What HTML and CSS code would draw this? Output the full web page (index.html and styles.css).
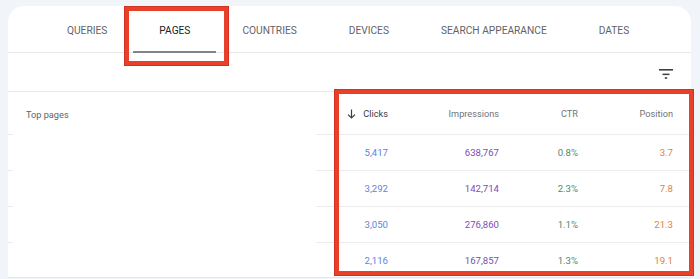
FILE: index.html
```html
<!DOCTYPE html>
<html lang="en">
<head>
    <meta charset="UTF-8">
    <title>Performance - Pages</title>
    <link rel="stylesheet" href="styles.css">
</head>
<body>
<div class="card">
    <div class="tabs">
        <div class="tab">Queries</div>
        <div class="tab active">Pages<span class="mark mark-tab"></span></div>
        <div class="tab">Countries</div>
        <div class="tab">Devices</div>
        <div class="tab">Search appearance</div>
        <div class="tab">Dates</div>
    </div>
    <div class="toolbar">
        <svg class="filter-icon" width="16" height="12" viewBox="0 0 16 12">
            <rect x="1" y="1" width="14" height="1.6" fill="#3c4043"/>
            <rect x="4.5" y="5.6" width="7" height="1.5" fill="#3c4043"/>
            <rect x="6.8" y="9.2" width="2.4" height="1.6" fill="#3c4043"/>
        </svg>
    </div>
    <div class="table">
        <div class="row head">
            <div class="stub"></div>
            <div class="page">Top pages</div>
            <div class="cell clicks-head">
                <svg width="9" height="10" viewBox="0 0 9 10">
                    <path d="M4.5 0.5 V9 M1 5.6 L4.5 9 L8 5.6" fill="none" stroke="#3c4043" stroke-width="1.2"/>
                </svg>
                Clicks
            </div>
            <div class="cell">Impressions</div>
            <div class="cell">CTR</div>
            <div class="cell">Position</div>
        </div>
        <div class="row">
            <div class="stub"></div>
            <div class="page"></div>
            <div class="cell clicks">5,417</div>
            <div class="cell impressions">638,767</div>
            <div class="cell ctr">0.8%</div>
            <div class="cell position">3.7</div>
        </div>
        <div class="row">
            <div class="stub"></div>
            <div class="page"></div>
            <div class="cell clicks">3,292</div>
            <div class="cell impressions">142,714</div>
            <div class="cell ctr">2.3%</div>
            <div class="cell position">7.8</div>
        </div>
        <div class="row">
            <div class="stub"></div>
            <div class="page"></div>
            <div class="cell clicks">3,050</div>
            <div class="cell impressions">276,860</div>
            <div class="cell ctr">1.1%</div>
            <div class="cell position">21.3</div>
        </div>
        <div class="row last">
            <div class="stub"></div>
            <div class="page"></div>
            <div class="cell clicks">2,116</div>
            <div class="cell impressions">167,857</div>
            <div class="cell ctr">1.3%</div>
            <div class="cell position">19.1</div>
        </div>
        <span class="mark mark-table"></span>
    </div>
</div>
</body>
</html>
```

FILE: styles.css
```css
* {
    box-sizing: border-box;
}
body {
    margin: 0;
    padding: 6px 9px 0 8px;
    background-color: #f1f4f9;
    font-family: Roboto, "Liberation Sans", Arial, sans-serif;
    color: #5f6368;
    height: 279px;
    overflow: hidden;
}
.card {
    background-color: #fff;
    border-radius: 16px 16px 0 0;
    border-bottom: 1px solid #e6e6e6;
    height: 272px;
}
.tabs {
    display: flex;
    padding-left: 33px;
    height: 47px;
    border-bottom: 1px solid #e8e8e8;
}
.tab {
    position: relative;
    padding: 19px 26px 0;
    font-size: 10.2px;
    text-transform: uppercase;
    color: #5f6368;
}
.tab.active {
    color: #202124;
}
.tab.active::after {
    content: "";
    position: absolute;
    left: 0;
    right: 0;
    bottom: -1px;
    height: 2px;
    background-color: #80868b;
}
.mark {
    position: absolute;
    border: 4px solid #e8402a;
    box-shadow: 0 0 0 1px #d2331f;
}
.mark-tab {
    left: -8px;
    right: -12px;
    top: 1px;
    bottom: -13px;
}
.toolbar {
    display: flex;
    justify-content: flex-end;
    align-items: center;
    height: 39px;
    padding: 4px 17px 0 0;
    border-bottom: 1px solid #e8e8e8;
}
.table {
    position: relative;
}
.mark-table {
    left: 327px;
    top: -2px;
    width: 358px;
    height: 185px;
}
.row {
    display: flex;
    height: 36px;
    font-size: 9.6px;
}
.row.head {
    height: 43px;
}
.row.last {
    height: 34px;
}
.stub {
    width: 5px;
    border-bottom: 1px solid #ececec;
}
.row.last .stub,
.row.last .cell {
    border-bottom: none;
}
.page {
    width: 303px;
    padding: 17px 0 0 13px;
    font-size: 9.2px;
    color: #5f6368;
}
.cell {
    display: flex;
    align-items: center;
    justify-content: flex-end;
    border-bottom: 1px solid #ececec;
    padding-bottom: 1px;
}
.row.last .cell {
    padding-bottom: 0;
}
.cell:nth-child(3) {
    width: 72px;
}
.cell:nth-child(4) {
    width: 111px;
}
.cell:nth-child(5) {
    width: 79px;
}
.cell:nth-child(6) {
    width: 113px;
    padding-right: 18px;
}
.head .cell {
    font-size: 9.2px;
    color: #70757a;
    padding: 1px 0 0;
}
.head .cell:nth-child(6) {
    padding-right: 18px;
}
.head .clicks-head {
    color: #3c4043;
    gap: 7px;
}
.clicks {
    color: #5b86dc;
}
.impressions {
    color: #7e4bb4;
}
.ctr {
    color: #4f8a6c;
}
.position {
    color: #de7f48;
}
```
